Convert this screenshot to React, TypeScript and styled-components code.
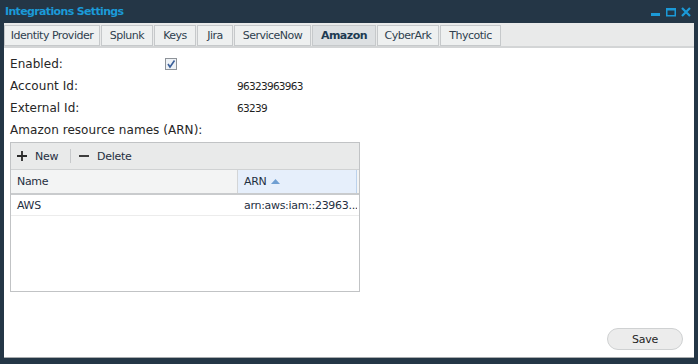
import React from "react";
import styled, { createGlobalStyle } from "styled-components";

const Global = createGlobalStyle`
  html, body { margin: 0; padding: 0; background: #ffffff; }
  body { font-family: "DejaVu Sans", Verdana, sans-serif; }
  * { box-sizing: border-box; }
`;

const Window = styled.div`
  width: 698px;
  height: 364px;
  background: #243646;
  display: flex;
  flex-direction: column;
  padding: 0 4px 6px 4px;
`;

const TitleBar = styled.div`
  height: 23px;
  display: flex;
  align-items: center;
  justify-content: space-between;
  padding: 0 3px 0 1px;
`;

const Title = styled.div`
  color: #1b9ad8;
  font-weight: bold;
  font-size: 11px;
  letter-spacing: -0.65px;
`;

const WinButtons = styled.div`
  display: flex;
  gap: 5px;
  align-items: center;
`;

const Body = styled.div`
  flex: 1;
  background: #ffffff;
  display: flex;
  flex-direction: column;
  border-bottom: 1px solid #a9acae;
`;

const TabStrip = styled.div`
  background: #e9eaea;
  display: flex;
  padding: 2px 0 0 0;
  height: 25px;
  border-bottom: 2px solid #d3d5d6;
`;

const Tab = styled.div<{ $active?: boolean; $w: number }>`
  width: ${(p) => p.$w}px;
  height: 21px;
  display: flex;
  align-items: center;
  justify-content: center;
  white-space: nowrap;
  font-size: 11px;
  letter-spacing: -0.5px;
  color: ${(p) => (p.$active ? "#1d3a52" : "#2f3f4f")};
  font-weight: ${(p) => (p.$active ? "bold" : "normal")};
  background: ${(p) => (p.$active ? "#dde0e2" : "#eef0f0")};
  border: 1px solid #c6c9cb;
  margin-right: 1px;
`;

const Content = styled.div`
  flex: 1;
  display: flex;
  flex-direction: column;
  padding: 5px 6px 7px 6px;
  font-size: 11px;
  letter-spacing: -0.3px;
  color: #2b2b2b;
`;

const FormRow = styled.div`
  display: flex;
  align-items: center;
  height: 22px;
`;

const Label = styled.div<{ $w?: number }>`
  width: ${(p) => (p.$w ?? 227)}px;
  flex: none;
  font-size: 12px;
  letter-spacing: 0.05px;
  color: #262626;
`;

const Value = styled.div`
  font-size: 10.5px;
  letter-spacing: -0.7px;
  color: #1f1f1f;
`;

const Check = styled.div`
  width: 12px;
  height: 12px;
  border: 1px solid #8e9399;
  background: #eef2f6;
  display: flex;
  align-items: center;
  justify-content: center;
`;

const Grid = styled.div`
  margin-top: 1px;
  width: 350px;
  height: 150px;
  border: 1px solid #c1c3c5;
  display: flex;
  flex-direction: column;
`;

const Toolbar = styled.div`
  height: 27px;
  background: #e9eaea;
  display: flex;
  align-items: center;
  padding-left: 6px;
  border-bottom: 1px solid #d0d2d3;
`;

const ToolBtn = styled.div`
  display: flex;
  align-items: center;
  gap: 8px;
  padding: 0 6px 0 0;
  color: #1f2f3f;
`;

const Sep = styled.div`
  width: 1px;
  height: 14px;
  background: #c7c9cb;
  margin: 0 8px 0 6px;
`;

const HeaderRow = styled.div`
  display: flex;
  height: 25px;
  border-bottom: 2px solid #c9cbcd;
`;

const HeadCell = styled.div<{ $w: number; $sorted?: boolean }>`
  width: ${(p) => p.$w}px;
  flex: none;
  display: flex;
  align-items: center;
  gap: 4px;
  padding-left: 6px;
  background: ${(p) => (p.$sorted ? "#e6effb" : "#f3f4f4")};
  border-right: 1px solid ${(p) => (p.$sorted ? "#bcd2ec" : "#d3d5d6")};
  color: #1f2f3f;
`;

const Filler = styled.div`
  flex: 1;
  background: #f3f4f4;
`;

const DataRow = styled.div`
  display: flex;
  height: 21px;
  border-bottom: 1px solid #ececec;
`;

const DataCell = styled.div<{ $w: number }>`
  width: ${(p) => p.$w}px;
  flex: none;
  display: flex;
  align-items: center;
  padding-left: 6px;
  color: #1f2f3f;
  white-space: nowrap;
  overflow: hidden;
`;

const Footer = styled.div`
  margin-top: auto;
  display: flex;
  justify-content: flex-end;
  padding-right: 5px;
`;

const SaveButton = styled.button`
  width: 76px;
  height: 22px;
  border-radius: 11px;
  border: 1px solid #cfd1d2;
  background: #ececec;
  font-family: "DejaVu Sans", Verdana, sans-serif;
  font-size: 11px;
  letter-spacing: -0.3px;
  color: #1f1f1f;
`;

const tabs: [string, number][] = [
  ["Identity Provider", 96],
  ["Splunk", 52],
  ["Keys", 42],
  ["Jira", 36],
  ["ServiceNow", 77],
  ["Amazon", 64],
  ["CyberArk", 62],
  ["Thycotic", 61],
];

export default function App() {
  return (
    <>
      <Global />
      <Window>
        <TitleBar>
          <Title>Integrations Settings</Title>
          <WinButtons>
            <svg width="10" height="10" viewBox="0 0 10 10">
              <rect x="0" y="6" width="9" height="3" fill="#1b9ad8" />
            </svg>
            <svg width="10" height="10" viewBox="0 0 10 10">
              <rect x="0.75" y="1.75" width="8.5" height="7" fill="none" stroke="#1b9ad8" strokeWidth="1.5" />
              <rect x="0" y="1" width="10" height="2.5" fill="#1b9ad8" />
            </svg>
            <svg width="10" height="10" viewBox="0 0 10 10">
              <path d="M1 1 L9 9 M9 1 L1 9" stroke="#1b9ad8" strokeWidth="2.2" />
            </svg>
          </WinButtons>
        </TitleBar>
        <Body>
          <TabStrip>
            {tabs.map(([t, w]) => (
              <Tab key={t} $w={w} $active={t === "Amazon"}>
                {t}
              </Tab>
            ))}
          </TabStrip>
          <Content>
            <FormRow>
              <Label $w={155}>Enabled:</Label>
              <Check>
                <svg width="10" height="10" viewBox="0 0 10 10">
                  <path d="M2 5 L4 8 L8.5 1.5" fill="none" stroke="#3a5f9a" strokeWidth="1.6" />
                </svg>
              </Check>
            </FormRow>
            <FormRow>
              <Label>Account Id:</Label>
              <Value>96323963963</Value>
            </FormRow>
            <FormRow>
              <Label>External Id:</Label>
              <Value>63239</Value>
            </FormRow>
            <FormRow>
              <Label>Amazon resource names (ARN):</Label>
            </FormRow>
            <Grid>
              <Toolbar>
                <ToolBtn>
                  <svg width="10" height="10" viewBox="0 0 10 10">
                    <path d="M5 0 V10 M0 5 H10" stroke="#2a2a2a" strokeWidth="1.8" />
                  </svg>
                  New
                </ToolBtn>
                <Sep />
                <ToolBtn>
                  <svg width="10" height="10" viewBox="0 0 10 10">
                    <path d="M0 5 H10" stroke="#2a2a2a" strokeWidth="1.8" />
                  </svg>
                  Delete
                </ToolBtn>
              </Toolbar>
              <HeaderRow>
                <HeadCell $w={227}>Name</HeadCell>
                <HeadCell $w={119} $sorted>
                  ARN
                  <svg width="9" height="5" viewBox="0 0 9 5">
                    <path d="M0 5 L4.5 0 L9 5 Z" fill="#6f9fd2" />
                  </svg>
                </HeadCell>
                <Filler />
              </HeaderRow>
              <DataRow>
                <DataCell $w={227}>AWS</DataCell>
                <DataCell $w={119}>arn:aws:iam::23963...</DataCell>
              </DataRow>
            </Grid>
            <Footer>
              <SaveButton>Save</SaveButton>
            </Footer>
          </Content>
        </Body>
      </Window>
    </>
  );
}
